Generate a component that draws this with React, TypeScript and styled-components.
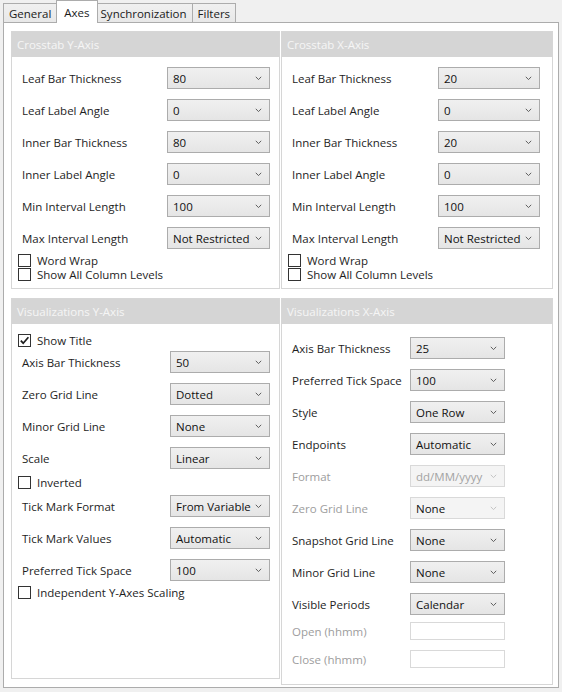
import React from 'react';
import styled, { createGlobalStyle } from 'styled-components';

const GlobalStyle = createGlobalStyle`
  html, body { margin: 0; padding: 0; background: #f0f0f0; }
  body {
    font-family: "Open Sans", "Noto Sans", "Liberation Sans", sans-serif;
    font-size: 11px;
    color: #1e1e1e;
  }
  * { box-sizing: border-box; }
`;

const Window = styled.div`
  width: 562px;
  height: 692px;
  background: #f0f0f0;
  display: flex;
  flex-direction: column;
  overflow: hidden;
`;

const TabStrip = styled.div`
  display: flex;
  align-items: flex-end;
  height: 23px;
  padding-left: 4px;
  margin-bottom: -1px;
  position: relative;
  z-index: 2;
`;

const Tab = styled.div<{ $active?: boolean }>`
  height: ${(p) => (p.$active ? 23 : 20)}px;
  padding: 0 ${(p) => (p.$active ? 7 : 5)}px;
  margin: 0 ${(p) => (p.$active ? -2 : 0)}px 0 -1px;
  border: 1px solid #acacac;
  border-bottom: ${(p) => (p.$active ? 'none' : '1px solid #acacac')};
  background: ${(p) => (p.$active ? '#ffffff' : 'linear-gradient(#f0f0f0, #e8e8e8)')};
  display: flex;
  align-items: center;
  padding-top: ${(p) => (p.$active ? 0 : 1)}px;
  font-size: 11.5px;
  color: #1a1a1a;
  position: relative;
  z-index: ${(p) => (p.$active ? 2 : 1)};
  white-space: nowrap;
`;

const TabPage = styled.div`
  flex: 1;
  margin: 0 3px 4px 3px;
  border: 1px solid #acacac;
  background: #ffffff;
  padding: 8px 4px 0 7px;
  position: relative;
  z-index: 1;
`;

const PanelGrid = styled.div`
  display: grid;
  grid-template-columns: 269px 272px;
  column-gap: 1px;
  row-gap: 9px;
  align-items: start;
`;

const Panel = styled.section<{ $h: number }>`
  height: ${(p) => p.$h}px;
  border: 1px solid #d6d6d6;
  display: flex;
  flex-direction: column;
`;

const PanelHeader = styled.div`
  height: 25px;
  line-height: 25px;
  background: #d5d5d5;
  color: #f6f6f6;
  padding-left: 5px;
  font-size: 11.5px;
  white-space: nowrap;
`;

const PanelBody = styled.div<{ $pt: number }>`
  padding: ${(p) => p.$pt}px 10px 0 10px;
  display: flex;
  flex-direction: column;
`;

const FieldRow = styled.div<{ $label: number; $w: number; $mt?: number }>`
  display: grid;
  grid-template-columns: ${(p) => p.$label}px ${(p) => p.$w}px;
  align-items: center;
  margin-top: ${(p) => p.$mt ?? 0}px;
`;

const Label = styled.span<{ $disabled?: boolean }>`
  color: ${(p) => (p.$disabled ? '#9d9d9d' : '#1e1e1e')};
  white-space: nowrap;
  font-size: 11.5px;
`;

const ComboBox = styled.div<{ $disabled?: boolean; $dimText?: boolean }>`
  height: 22px;
  border: 1px solid ${(p) => (p.$disabled ? '#d9d9d9' : '#acacac')};
  background: ${(p) => (p.$disabled ? '#f4f4f4' : 'linear-gradient(#f0f0f0, #e5e5e5)')};
  display: flex;
  align-items: center;
  justify-content: space-between;
  padding: 0 7px 0 5px;
  color: ${(p) => (p.$dimText ? '#a3a3a3' : '#111111')};
  font-size: 11.5px;
  white-space: nowrap;
`;

const TextInput = styled.div`
  height: 18px;
  border: 1px solid #d9d9d9;
  background: #ffffff;
`;

const CheckRow = styled.label<{ $mt?: number }>`
  display: flex;
  align-items: center;
  gap: 6px;
  height: 14px;
  margin-left: -4px;
  margin-top: ${(p) => p.$mt ?? 0}px;
  font-size: 11.5px;
  color: #1e1e1e;
  white-space: nowrap;
`;

const Box = styled.span`
  width: 13px;
  height: 13px;
  border: 1px solid #333333;
  background: #ffffff;
  display: flex;
  align-items: center;
  justify-content: center;
  flex: none;
`;

const Chevron: React.FC<{ disabled?: boolean }> = ({ disabled }) => (
  <svg width="7" height="5" viewBox="0 0 7 5" style={{ flex: 'none' }}>
    <polyline
      points="0.8,0.8 3.5,3.6 6.2,0.8"
      fill="none"
      stroke={disabled ? '#c4c4c4' : '#606060'}
      strokeWidth="1"
    />
  </svg>
);

const Check: React.FC<{ checked?: boolean; label: string; mt?: number }> = ({ checked, label, mt }) => (
  <CheckRow $mt={mt}>
    <Box>
      {checked && (
        <svg width="11" height="11" viewBox="0 0 11 11">
          <polyline points="1.8,5.6 4.2,8.2 9.4,2.2" fill="none" stroke="#1e1e1e" strokeWidth="1.7" />
        </svg>
      )}
    </Box>
    {label}
  </CheckRow>
);

type FieldProps = {
  label: string;
  value?: string;
  lw: number;
  w: number;
  mt?: number;
  disabledLabel?: boolean;
  disabledCombo?: boolean;
  dimValue?: boolean;
  input?: boolean;
};

const Field: React.FC<FieldProps> = ({ label, value, lw, w, mt, disabledLabel, disabledCombo, dimValue, input }) => (
  <FieldRow $label={lw} $w={w} $mt={mt}>
    <Label $disabled={disabledLabel}>{label}</Label>
    {input ? (
      <TextInput />
    ) : (
      <ComboBox $disabled={disabledCombo} $dimText={dimValue}>
        <span>{value}</span>
        <Chevron disabled={disabledCombo} />
      </ComboBox>
    )}
  </FieldRow>
);

const crosstab = (a: string, b: string) => [
  ['Leaf Bar Thickness', a],
  ['Leaf Label Angle', '0'],
  ['Inner Bar Thickness', b],
  ['Inner Label Angle', '0'],
  ['Min Interval Length', '100'],
  ['Max Interval Length', 'Not Restricted'],
];

const CrosstabPanel: React.FC<{ title: string; thick: string; lw: number; w: number }> = ({ title, thick, lw, w }) => (
  <Panel $h={258}>
    <PanelHeader>{title}</PanelHeader>
    <PanelBody $pt={10}>
      {crosstab(thick, thick).map(([l, v], i) => (
        <Field key={l} label={l} value={v} lw={lw} w={w} mt={i === 0 ? 0 : 10} />
      ))}
      <Check label="Word Wrap" mt={4} />
      <Check label="Show All Column Levels" />
    </PanelBody>
  </Panel>
);

export default function App() {
  return (
    <>
      <GlobalStyle />
      <Window>
        <TabStrip>
          <Tab>General</Tab>
          <Tab $active>Axes</Tab>
          <Tab>Synchronization</Tab>
          <Tab>Filters</Tab>
        </TabStrip>
        <TabPage>
          <PanelGrid>
            <CrosstabPanel title="Crosstab Y-Axis" thick="80" lw={145} w={103} />
            <CrosstabPanel title="Crosstab X-Axis" thick="20" lw={146} w={102} />

            <Panel $h={381}>
              <PanelHeader>Visualizations Y-Axis</PanelHeader>
              <PanelBody $pt={9}>
                <Check label="Show Title" checked />
                <Field label="Axis Bar Thickness" value="50" lw={148} w={100} mt={4} />
                <Field label="Zero Grid Line" value="Dotted" lw={148} w={100} mt={10} />
                <Field label="Minor Grid Line" value="None" lw={148} w={100} mt={10} />
                <Field label="Scale" value="Linear" lw={148} w={100} mt={10} />
                <Check label="Inverted" mt={6} />
                <Field label="Tick Mark Format" value="From Variable" lw={148} w={100} mt={6} />
                <Field label="Tick Mark Values" value="Automatic" lw={148} w={100} mt={10} />
                <Field label="Preferred Tick Space" value="100" lw={148} w={100} mt={10} />
                <Check label="Independent Y-Axes Scaling" mt={4} />
              </PanelBody>
            </Panel>

            <Panel $h={387}>
              <PanelHeader>Visualizations X-Axis</PanelHeader>
              <PanelBody $pt={13}>
                <Field label="Axis Bar Thickness" value="25" lw={118} w={95} />
                <Field label="Preferred Tick Space" value="100" lw={118} w={95} mt={10} />
                <Field label="Style" value="One Row" lw={118} w={95} mt={10} />
                <Field label="Endpoints" value="Automatic" lw={118} w={95} mt={10} />
                <Field label="Format" value="dd/MM/yyyy" lw={118} w={95} mt={10} disabledLabel disabledCombo dimValue />
                <Field label="Zero Grid Line" value="None" lw={118} w={95} mt={10} disabledLabel disabledCombo />
                <Field label="Snapshot Grid Line" value="None" lw={118} w={95} mt={10} />
                <Field label="Minor Grid Line" value="None" lw={118} w={95} mt={10} />
                <Field label="Visible Periods" value="Calendar" lw={118} w={95} mt={10} />
                <Field label="Open (hhmm)" lw={118} w={95} mt={7} disabledLabel input />
                <Field label="Close (hhmm)" lw={118} w={95} mt={10} disabledLabel input />
              </PanelBody>
            </Panel>
          </PanelGrid>
        </TabPage>
      </Window>
    </>
  );
}
